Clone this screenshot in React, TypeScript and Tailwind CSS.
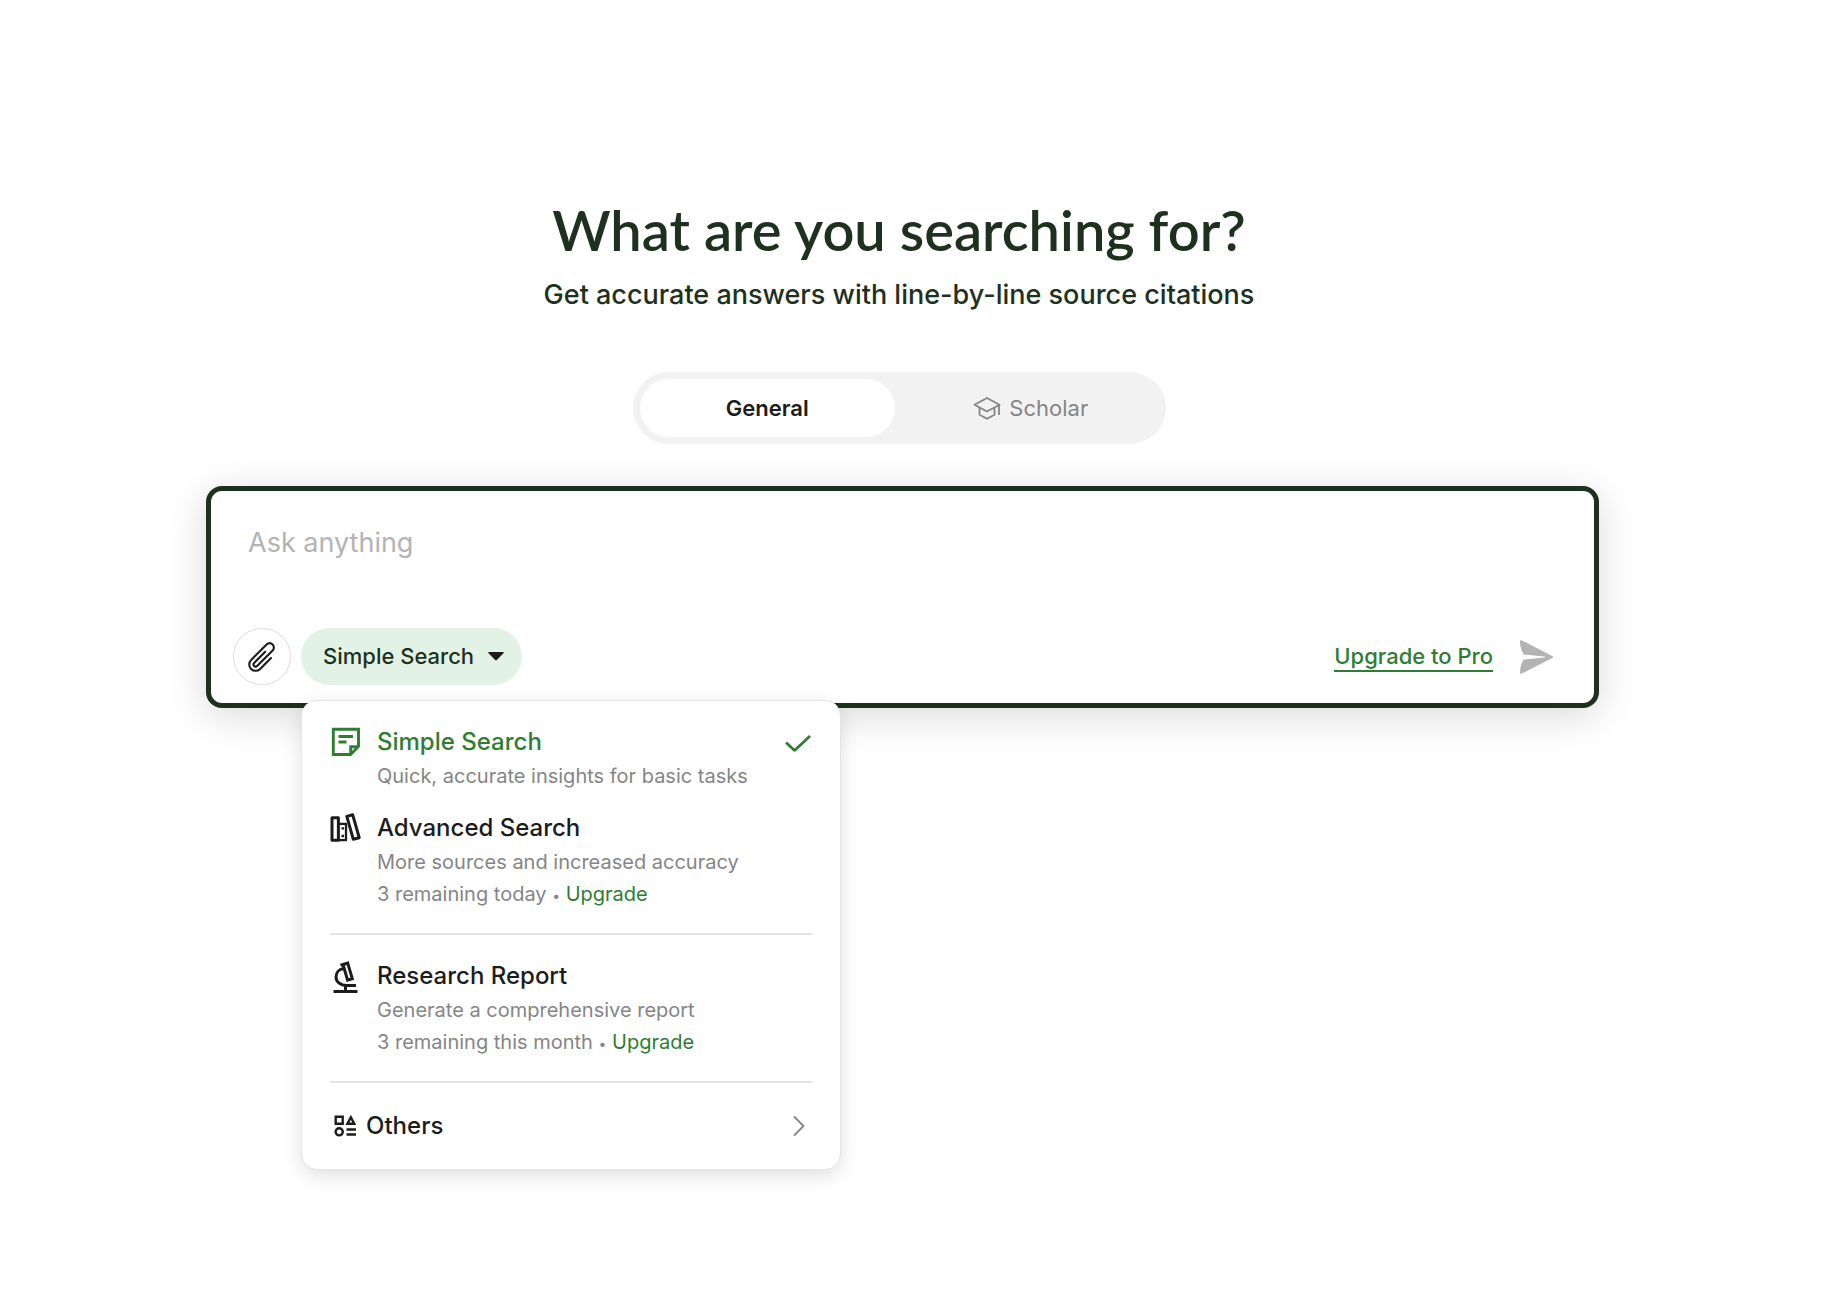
import { useState } from "react";
import type { ReactNode } from "react";

const NoteIcon = () => (
  <svg width="32" height="32" viewBox="0 0 32 32" fill="none" stroke="currentColor" strokeWidth="2.9" aria-hidden="true">
    <path d="M3.3 3.3h25.2v17.2l-8 8H3.3z" />
    <path d="M20.7 28.500v-7.800h7.800M8.500 10.500h14.500M8.500 16h8" />
  </svg>
);

const BooksIcon = () => (
  <svg width="32" height="32" viewBox="0 0 32 32" fill="none" stroke="currentColor" strokeWidth="3" strokeLinejoin="round" aria-hidden="true">
    <path d="M2 5.800h6.400v22.400H2z" />
    <path d="M8.700 11.800h7.300v16.400H8.700M11.500 16.300h2.500M11.500 24h2.500" strokeWidth="2.300" />
    <path d="M16.800 4.400l5.900-1.600 6.500 22.900-5.900 1.600z" />
  </svg>
);

const MicroscopeIcon = () => (
  <svg width="32" height="36" viewBox="0 0 32 36" fill="none" stroke="currentColor" strokeWidth="3" aria-hidden="true">
    <path d="M3.500 31.500h24M15.500 31v-5M26 25.400h-9C10 25.400 6 21.500 6 17c0-4.500 3.200-8 8-8.500" />
    <path d="M13 4.400l4.700-1.400 4.600 15.700-4.700 1.400zM10.500 5.200l8.500-2.500" />
  </svg>
);

const ShapesIcon = () => (
  <svg width="22" height="22" viewBox="0 0 22 22" fill="none" stroke="currentColor" strokeWidth="2.400" aria-hidden="true">
    <path d="M1.700 1.700h7v7h-7zM16.800 2.300l3.400 6.400h-6.800zM12.500 14.500H22M12.500 19.500H22" />
    <circle cx="5.200" cy="16.800" r="3.600" />
  </svg>
);

const CapIcon = () => (
  <svg width="28" height="28" viewBox="0 0 28 28" fill="none" stroke="currentColor" strokeWidth="1.800" strokeLinejoin="round" aria-hidden="true">
    <path d="M1.500 10.800L14 4l12.500 6.800L14 17.500zM6.500 13.500v7.200l7.500 4.100 7.500-4.100v-7.200M26 11v10" />
  </svg>
);

const PaperClipIcon = () => (
  <svg width="34" height="34" viewBox="0 0 24 24" fill="none" stroke="currentColor" strokeWidth="1.500" strokeLinecap="round" strokeLinejoin="round" aria-hidden="true">
    <path d="M18.375 12.739l-7.693 7.693a4.500 4.500 0 0 1-6.364-6.364l10.940-10.940A3 3 0 1 1 19.500 7.372L8.552 18.320m.009-.010l-.010.010m5.699-9.941l-7.810 7.810a1.500 1.500 0 0 0 2.112 2.130" />
  </svg>
);

const SendIcon = () => (
  <svg width="34" height="34" viewBox="0 0 34 34" fill="currentColor" aria-hidden="true">
    <path d="M0 1.300C0 .3 1 0 1.800.4L32.600 16.200c.7.400.7 1.200 0 1.600L1.800 33.600C1 34 0 33.700 0 32.700c0-4.700 1.200-9.200 3.700-13.200L24.500 17.600c.8-.1.800-1.100 0-1.200L3.700 14.500C1.200 10.500 0 6 0 1.300z" />
  </svg>
);

type OptionProps = {
  icon: ReactNode;
  title: string;
  description: string;
  remaining?: string;
  selected?: boolean;
};

const Option = ({ icon, title, description, remaining, selected }: OptionProps) => (
  <div className="flex items-start gap-[15px]">
    <div className={selected ? "pt-0.5 text-[#2e7d32]" : "pt-0.5 text-[#1c1c1c]"}>{icon}</div>
    <div className="flex-1 text-xl leading-8 text-[#858585]">
      <button
        className={
          selected
            ? "block w-full text-left text-2xl leading-9 font-medium text-[#2e7d32]"
            : "block w-full text-left text-2xl leading-9 font-medium text-[#1c1c1c]"
        }
      >
        {title}
      </button>
      <p>{description}</p>
      {remaining && (
        <p>
          {remaining} <span className="text-sm">•</span> <a href="#upgrade" className="text-[#2e7d32]">Upgrade</a>
        </p>
      )}
    </div>
    {selected && (
      <svg className="mt-1.5 text-[#2e7d32]" width="28" height="28" viewBox="0 0 28 28" fill="none" stroke="currentColor" strokeWidth="2.800" aria-hidden="true">
        <path d="M2 12.500l7.800 7.300c.6.500 1 .5 1.600 0L26 6" />
      </svg>
    )}
  </div>
);

const SearchMenu = () => (
  <div className="absolute top-[72px] left-0 w-[540px] rounded-2xl border border-[#e4e4e4] bg-white px-7 py-[23px] shadow-[0_6px_20px_rgba(0,0,0,0.12)]">
    <div className="flex flex-col gap-[18px]">
      <Option icon={<NoteIcon />} title="Simple Search" description="Quick, accurate insights for basic tasks" selected />
      <Option icon={<BooksIcon />} title="Advanced Search" description="More sources and increased accuracy" remaining="3 remaining today" />
    </div>
    <hr className="my-[23px] border-t-2 border-[#e4e4e4]" />
    <Option icon={<MicroscopeIcon />} title="Research Report" description="Generate a comprehensive report" remaining="3 remaining this month" />
    <hr className="my-[23px] border-t-2 border-[#e4e4e4]" />
    <button className="flex w-full items-center pl-1 text-2xl leading-10 font-medium text-[#1c1c1c]">
      <ShapesIcon />
      <span className="ml-2.5 flex-1 text-left">Others</span>
      <svg className="mr-1.5 text-[#858585]" width="14" height="22" viewBox="0 0 14 22" fill="none" stroke="currentColor" strokeWidth="1.800" strokeLinecap="round" strokeLinejoin="round" aria-hidden="true">
        <path d="M2.500 2l9 9-9 9" />
      </svg>
    </button>
  </div>
);

const Composer = () => {
  const [question, setQuestion] = useState("");

  return (
    <form className="rounded-2xl border-[5px] border-[#1e301e] bg-white pt-8 pr-10 pb-[18px] pl-[22px] shadow-[0_8px_40px_rgba(0,0,20,0.15)]">
      <textarea
        aria-label="Ask anything"
        placeholder="Ask anything"
        rows={1}
        value={question}
        onChange={(e) => setQuestion(e.target.value)}
        className="block h-[105px] w-full resize-none pl-[15px] text-[27px] leading-10 outline-none placeholder:text-[#b3b3b3]"
      />
      <div className="flex items-center">
        <button type="button" aria-label="Attach a file" className="flex h-[57px] w-[58px] items-center justify-center rounded-full border border-[#dcdcdc] text-[#1c1c1c]">
          <PaperClipIcon />
        </button>
        <div className="relative ml-2.5">
          <button type="button" className="flex h-[57px] items-center gap-3.5 rounded-full bg-[#e2f3e5] pr-[18px] pl-[22px] text-[22px] font-medium text-[#1e301e]">
            Simple Search
            <svg width="16" height="9" viewBox="0 0 16 9" fill="#1c1c1c" aria-hidden="true">
              <path d="M1 0h14c.8 0 1 .8.500 1.300L8.800 8c-.5.500-1.100.5-1.600 0L.5 1.300C0 .8.200 0 1 0z" />
            </svg>
          </button>
          <SearchMenu />
        </div>
        <a href="#pro" className="ml-auto border-b-2 border-[#2e7d32] text-[22px] leading-7 font-medium text-[#2e7d32]">Upgrade to Pro</a>
        <button type="submit" aria-label="Send" className="ml-[27px] text-[#b3b3b3]">
          <SendIcon />
        </button>
      </div>
    </form>
  );
};

const App = () => {
  return (
    <main className="min-h-screen bg-white pt-[190px] pr-[245px] pl-[206px] font-['Inter',sans-serif]">
      <header className="flex flex-col items-center pr-[7px]">
        <h1 className="font-['Lato',sans-serif] text-[56px] leading-20 font-semibold text-[#1e301e]">What are you searching for?</h1>
        <p className="mt-[5px] text-[27px] leading-10 font-medium text-[#1e301e]">Get accurate answers with line-by-line source citations</p>
        <div className="mt-[57px] mb-[42px] flex h-18 w-[533px] gap-2 rounded-full bg-[#f2f2f2] p-[7px] text-[22px]">
          <button className="flex-1 rounded-full bg-white font-semibold text-[#1c1c1c]">General</button>
          <button className="flex flex-1 items-center justify-center gap-2 rounded-full text-[#858585]">
            <CapIcon />
            Scholar
          </button>
        </div>
      </header>
      <Composer />
    </main>
  );
};

export default App;
